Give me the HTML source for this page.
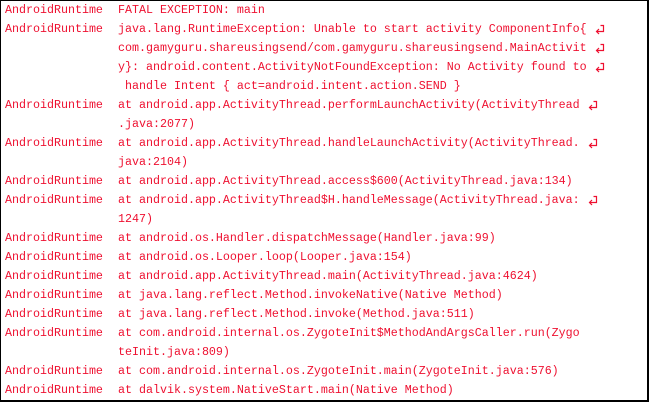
<!DOCTYPE html>
<html><head><meta charset="utf-8"><style>
html,body{margin:0;padding:0;background:#fff;}
.frame{position:absolute;left:0;top:0;width:646px;height:399px;border-left:1px solid #000;border-top:1px solid #000;border-right:2px solid #000;border-bottom:2px solid #000;overflow:hidden;}
.l{position:absolute;font-family:"Liberation Mono","Courier New",monospace;font-size:11.67px;color:#ee1030;white-space:pre;line-height:19px;height:19px;}
.t{left:4px}.m{left:117px}
svg{position:absolute;left:593px;width:11px;height:11px}
</style></head><body><div class="frame">
<div class="l t" style="top:0px">AndroidRuntime</div><div class="l m" style="top:0px">FATAL EXCEPTION: main</div>
<div class="l t" style="top:19px">AndroidRuntime</div><div class="l m" style="top:19px">java.lang.RuntimeException: Unable to start activity ComponentInfo{</div>
<div class="l m" style="top:38px">com.gamyguru.shareusingsend/com.gamyguru.shareusingsend.MainActivit</div>
<div class="l m" style="top:57px">y}: android.content.ActivityNotFoundException: No Activity found to</div>
<div class="l m" style="top:76px"> handle Intent { act=android.intent.action.SEND }</div>
<div class="l t" style="top:95px">AndroidRuntime</div><div class="l m" style="top:95px">at android.app.ActivityThread.performLaunchActivity(ActivityThread </div>
<div class="l m" style="top:114px">.java:2077)</div>
<div class="l t" style="top:133px">AndroidRuntime</div><div class="l m" style="top:133px">at android.app.ActivityThread.handleLaunchActivity(ActivityThread.</div>
<div class="l m" style="top:152px">java:2104)</div>
<div class="l t" style="top:171px">AndroidRuntime</div><div class="l m" style="top:171px">at android.app.ActivityThread.access$600(ActivityThread.java:134)</div>
<div class="l t" style="top:190px">AndroidRuntime</div><div class="l m" style="top:190px">at android.app.ActivityThread$H.handleMessage(ActivityThread.java:</div>
<div class="l m" style="top:209px">1247)</div>
<div class="l t" style="top:228px">AndroidRuntime</div><div class="l m" style="top:228px">at android.os.Handler.dispatchMessage(Handler.java:99)</div>
<div class="l t" style="top:247px">AndroidRuntime</div><div class="l m" style="top:247px">at android.os.Looper.loop(Looper.java:154)</div>
<div class="l t" style="top:266px">AndroidRuntime</div><div class="l m" style="top:266px">at android.app.ActivityThread.main(ActivityThread.java:4624)</div>
<div class="l t" style="top:285px">AndroidRuntime</div><div class="l m" style="top:285px">at java.lang.reflect.Method.invokeNative(Native Method)</div>
<div class="l t" style="top:304px">AndroidRuntime</div><div class="l m" style="top:304px">at java.lang.reflect.Method.invoke(Method.java:511)</div>
<div class="l t" style="top:323px">AndroidRuntime</div><div class="l m" style="top:323px">at com.android.internal.os.ZygoteInit$MethodAndArgsCaller.run(Zygo</div>
<div class="l m" style="top:342px">teInit.java:809)</div>
<div class="l t" style="top:361px">AndroidRuntime</div><div class="l m" style="top:361px">at com.android.internal.os.ZygoteInit.main(ZygoteInit.java:576)</div>
<div class="l t" style="top:380px">AndroidRuntime</div><div class="l m" style="top:380px">at dalvik.system.NativeStart.main(Native Method)</div>
<svg style="top:23px" viewBox="0 0 11 11"><path d="M6.5 1.5H9.5V7.5H2.5M5 5L2.5 7.5L5 10" fill="none" stroke="#ee1030" stroke-width="1.2"/></svg>
<svg style="top:42px" viewBox="0 0 11 11"><path d="M6.5 1.5H9.5V7.5H2.5M5 5L2.5 7.5L5 10" fill="none" stroke="#ee1030" stroke-width="1.2"/></svg>
<svg style="top:61px" viewBox="0 0 11 11"><path d="M6.5 1.5H9.5V7.5H2.5M5 5L2.5 7.5L5 10" fill="none" stroke="#ee1030" stroke-width="1.2"/></svg>
<svg style="top:99px;left:586px" viewBox="0 0 11 11"><path d="M6.5 1.5H9.5V7.5H2.5M5 5L2.5 7.5L5 10" fill="none" stroke="#ee1030" stroke-width="1.2"/></svg>
<svg style="top:137px;left:586px" viewBox="0 0 11 11"><path d="M6.5 1.5H9.5V7.5H2.5M5 5L2.5 7.5L5 10" fill="none" stroke="#ee1030" stroke-width="1.2"/></svg>
<svg style="top:194px;left:586px" viewBox="0 0 11 11"><path d="M6.5 1.5H9.5V7.5H2.5M5 5L2.5 7.5L5 10" fill="none" stroke="#ee1030" stroke-width="1.2"/></svg>
</div></body></html>
